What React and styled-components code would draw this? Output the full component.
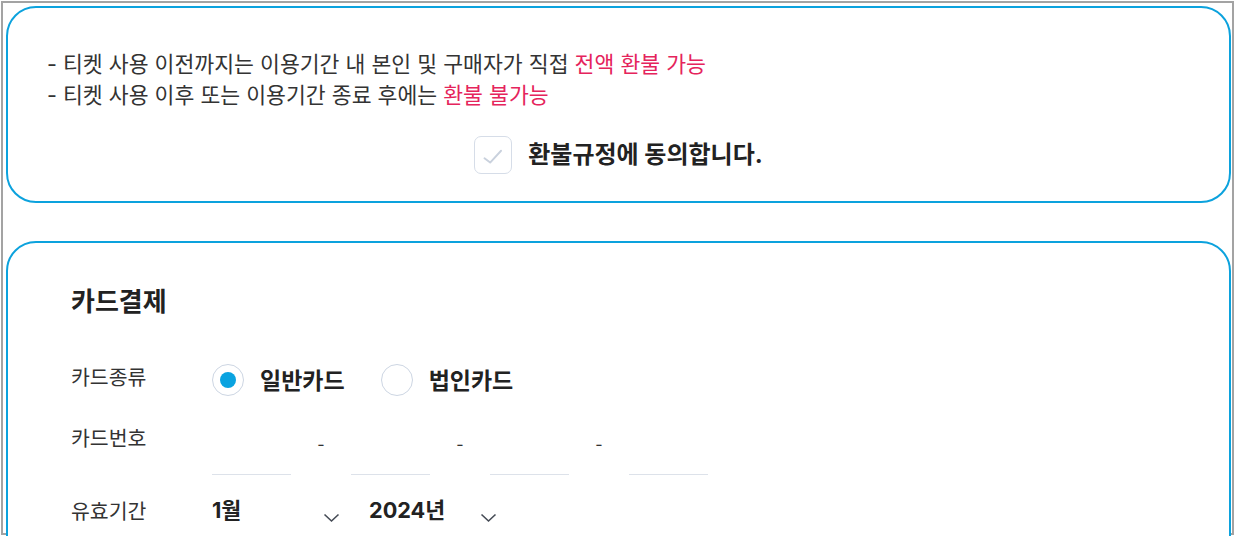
import React, { useState } from 'react';
import styled, { createGlobalStyle } from 'styled-components';

const GlobalStyle = createGlobalStyle`
  html, body {
    margin: 0;
    padding: 0;
    overflow: hidden;
    background: #fff;
  }
  body {
    font-family: Inter, "Noto Sans CJK KR", sans-serif;
    color: #222;
  }
`;

const Frame = styled.div`
  margin: 1px;
  width: 1233px;
  height: 534px;
  box-sizing: border-box;
  border: 2px solid #a3a3a3;
  padding: 3px 0 0 3px;
  display: flex;
  flex-direction: column;
  gap: 38px;
`;

const Card = styled.section`
  width: 1225px;
  box-sizing: border-box;
  border: 2px solid #0ca2dd;
  border-radius: 30px;
  background: #fff;
  flex-shrink: 0;
  padding: ${p => p.$pad};
  min-height: ${p => p.$h || 'auto'};
`;

const Notice = styled.ul`
  list-style: none;
  margin: 0;
  padding: 0;
  font-size: 21.6px;
  line-height: 31px;
  color: #333;
`;

const Hl = styled.span`
  color: #e5245c;
`;

const AgreeRow = styled.label`
  display: flex;
  justify-content: center;
  align-items: center;
  gap: 16px;
  margin-top: 25px;
  cursor: pointer;
`;

const CheckBox = styled.span`
  width: 38px;
  height: 38px;
  box-sizing: border-box;
  border: 1.5px solid #d6dde8;
  border-radius: 7px;
  display: flex;
  align-items: center;
  justify-content: center;
  background: ${p => (p.$on ? '#0ca2dd' : '#fff')};
`;

const AgreeText = styled.span`
  font-size: 24px;
  font-weight: 700;
  color: #222;
  line-height: 38px;
`;

const Title = styled.h2`
  margin: 0;
  font-size: 26px;
  line-height: 32px;
  font-weight: 700;
  color: #222;
`;

const Row = styled.div`
  display: grid;
  grid-template-columns: 141px 1fr;
  align-items: ${p => p.$align || 'center'};
  margin-top: ${p => p.$mt};
`;

const Label = styled.span`
  font-size: 20.5px;
  line-height: 28px;
  color: #333;
  transform: translateY(${p => p.$dy || '0px'});
`;

const Options = styled.div`
  display: flex;
  align-items: center;
`;

const RadioItem = styled.label`
  display: flex;
  align-items: center;
  gap: 16px;
  margin-right: 36px;
  cursor: pointer;
`;

const RadioCircle = styled.span`
  width: 32px;
  height: 32px;
  box-sizing: border-box;
  border-radius: 50%;
  border: 1.5px solid #cdd6e3;
  display: flex;
  align-items: center;
  justify-content: center;
  &::after {
    content: '';
    width: 16px;
    height: 16px;
    border-radius: 50%;
    background: ${p => (p.$on ? '#0aa3e0' : 'transparent')};
  }
`;

const OptionText = styled.span`
  font-size: 23px;
  font-weight: 700;
  color: #222;
  transform: translateY(-1px);
`;

const CardNumber = styled.div`
  display: flex;
  align-items: flex-start;
`;

const NumInput = styled.input`
  width: 79px;
  height: 50px;
  box-sizing: border-box;
  border: none;
  border-bottom: 1px solid #dde2ea;
  outline: none;
  font-size: 18px;
  font-family: inherit;
  padding: 0;
  background: transparent;
`;

const Dash = styled.span`
  width: 60px;
  text-align: center;
  font-size: 16px;
  line-height: 20px;
  padding-top: 9px;
  color: #333;
`;

const Selects = styled.div`
  display: flex;
  align-items: center;
  gap: 29px;
`;

const Select = styled.div`
  width: 128px;
  display: flex;
  align-items: center;
  justify-content: space-between;
  font-size: 21.7px;
  font-weight: 700;
  line-height: 28px;
  color: #222;
  cursor: pointer;
  span {
    transform: translateY(-2px);
  }
  svg {
    margin-top: 12px;
  }
`;

const Chevron = () => (
  <svg width="17" height="10" viewBox="0 0 17 10">
    <polyline points="1.5,1.5 8.5,8 15.5,1.5" fill="none" stroke="#454b55" strokeWidth="1.6" />
  </svg>
);

export default function App() {
  const [agree, setAgree] = useState(false);
  const [type, setType] = useState('normal');

  return (
    <>
      <GlobalStyle />
      <Frame>
        <Card $pad="41px 39px 27px" $h="197px">
          <Notice>
            <li>- 티켓 사용 이전까지는 이용기간 내 본인 및 구매자가 직접 <Hl>전액 환불 가능</Hl></li>
            <li>- 티켓 사용 이후 또는 이용기간 종료 후에는 <Hl>환불 불가능</Hl></li>
          </Notice>
          <AgreeRow onClick={() => setAgree(!agree)}>
            <CheckBox $on={agree}>
              <svg width="38" height="38" viewBox="0 0 38 38">
                <polyline
                  points="10,22.5 16,27 27.5,14.5"
                  fill="none"
                  stroke={agree ? '#fff' : '#c9d1dd'}
                  strokeWidth="2"
                  strokeLinecap="round"
                  strokeLinejoin="round"
                />
              </svg>
            </CheckBox>
            <AgreeText>환불규정에 동의합니다.</AgreeText>
          </AgreeRow>
        </Card>

        <Card $pad="43px 63px 40px" $h="340px">
          <Title>카드결제</Title>

          <Row $mt="45px">
            <Label $dy="-2px">카드종류</Label>
            <Options>
              <RadioItem onClick={() => setType('normal')}>
                <RadioCircle $on={type === 'normal'} />
                <OptionText>일반카드</OptionText>
              </RadioItem>
              <RadioItem onClick={() => setType('corp')}>
                <RadioCircle $on={type === 'corp'} />
                <OptionText>법인카드</OptionText>
              </RadioItem>
            </Options>
          </Row>

          <Row $mt="28px" $align="start">
            <Label>카드번호</Label>
            <CardNumber>
              <NumInput maxLength={4} />
              <Dash>-</Dash>
              <NumInput maxLength={4} />
              <Dash>-</Dash>
              <NumInput maxLength={4} />
              <Dash>-</Dash>
              <NumInput maxLength={4} />
            </CardNumber>
          </Row>

          <Row $mt="23px">
            <Label>유효기간</Label>
            <Selects>
              <Select>
                <span>1월</span>
                <Chevron />
              </Select>
              <Select>
                <span>2024년</span>
                <Chevron />
              </Select>
            </Selects>
          </Row>
        </Card>
      </Frame>
    </>
  );
}
